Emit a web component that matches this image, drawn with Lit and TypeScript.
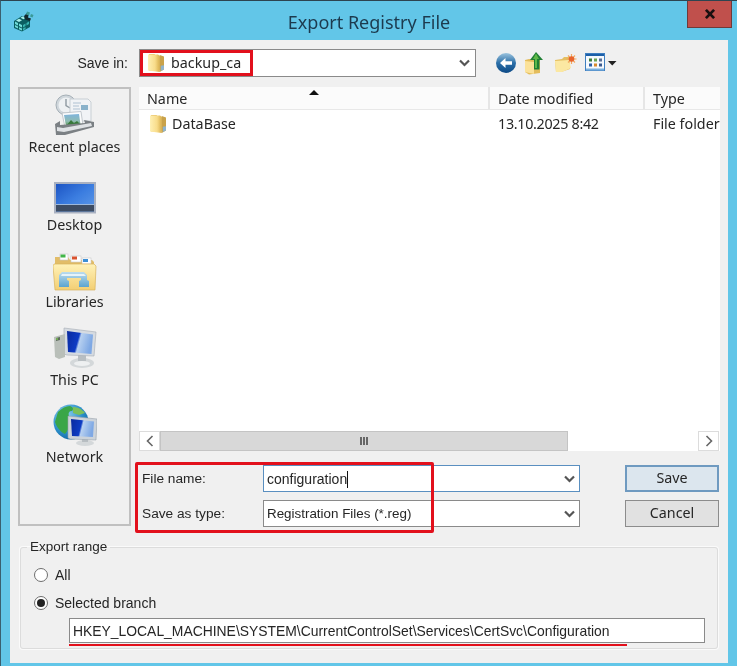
import { LitElement, html, css } from "lit";
import { customElement } from "lit/decorators.js";

const folderSmall = (id: string) => html`<svg class="ico-folder" width="16" height="20" viewBox="1 2 15 18">
  <defs><linearGradient id=${id} x1="0" y1="0" x2="1" y2="0"><stop offset="0" stop-color="#fff0b4"/><stop offset=".6" stop-color="#f8dc8a"/><stop offset="1" stop-color="#d9b04e"/></linearGradient></defs>
  <path d="M2 2.500h5l1.500 1.500H12v14H2z" fill="#e3bb5e"/>
  <path d="M1 3h9.500l1.500 2v14.500L1 18z" fill=${`url(#${id})`}/>
  <path d="M12 3.500l4 1.500v12l-4 2.500z" fill="#c9a24a"/>
  <path d="M13 13.500l3-.5v4l-3 1.500z" fill="#8fb4cc"/>
</svg>`;

const regIcon = html`<svg width="22" height="22" viewBox="0 0 22 22">
  <path d="M1 11l8-5 8 4v7l-8 4.500-8-3.500z" fill="#0a5f62"/>
  <path d="M2 11.500l3 1.500v2.500l-3-1.500zM6 13.500l3 1.500v2.500l-3-1.500zM2 15l3 1.500v2l-3-1.500zM6 17.200l3 1.300v2l-3-1.300z" fill="#6fdcd8"/>
  <path d="M10 15l2.500-1.500v2.500l-2.500 1.500zM13.500 13l2.500-1.500v2.500l-2.500 1.500zM10 18.500l2.500-1.500v2L10 20.500z" fill="#36b4b0"/>
  <path d="M3 10.500l3-1.800 3 1.500-3 1.800zM7.500 7.800l2-1.200 3 1.500-2 1.200z" fill="#a8f0ea"/>
  <path d="M11 6l3-3 2 .5-1 4 3 1-1 2.500-5-1.500z" fill="#12282e"/>
  <path d="M14 1.500l3 1-1 3-3-1zM18 4l2.500 1-1 2.500-2.500-1z" fill="#3a9a98"/>
</svg>`;

const backIcon = html`<svg width="22" height="22" viewBox="0 0 22 22">
  <defs><linearGradient id="bk" x1="0" y1="0" x2="0" y2="1"><stop offset="0" stop-color="#9cc4de"/><stop offset=".5" stop-color="#2b6fa8"/><stop offset="1" stop-color="#0d4a86"/></linearGradient></defs>
  <circle cx="11" cy="11" r="10" fill="url(#bk)"/>
  <path d="M5 11l5.500-5v3.300H17v3.400h-6.500V16z" fill="#fff"/>
</svg>`;

const upIcon = html`<svg width="22" height="24" viewBox="0 0 22 24">
  <path d="M1 9l4-1 11 1v13l-11 1.500L1 21z" fill="#e4bd5c"/>
  <path d="M1 10l9 1v12l-9-2z" fill="#fbe29a"/>
  <path d="M12 1l7 8h-3.500v9.500H10V9H6z" fill="#1f7f34"/>
  <path d="M12 2.500L9 8h2v9h2V8h2z" fill="#5fb848"/>
</svg>`;

const newFolderIcon = html`<svg width="24" height="20" viewBox="0 0 24 20">
  <path d="M1 7l7-1 2-2h6v12l-9 3H2z" fill="#e4bf62"/>
  <path d="M1 8l14-1 2 8-9 4H2z" fill="#fbe8a2"/>
  <path d="M17.500 1v10M12.500 6h10M14 2.500l7 7M21 2.500l-7 7" stroke="#f2a860" stroke-width="1.200"/>
  <circle cx="17.500" cy="6" r="2.800" fill="#e8642c"/>
</svg>`;

const viewsIcon = html`<svg width="32" height="20" viewBox="0 0 32 20">
  <rect x=".5" y=".5" width="19" height="17" fill="#f5f9fd" stroke="#3f7fc0"/>
  <rect x="1" y="1" width="18" height="2" fill="#1d5fa8"/>
  <rect x="1" y="15.500" width="18" height="2" fill="#7ab0de"/>
  <rect x="4" y="5.500" width="3" height="3" fill="#3e7d3c"/><rect x="9" y="5.500" width="3" height="3" fill="#6aa450"/><rect x="14" y="5.500" width="3" height="3" fill="#5a6f95"/>
  <rect x="4" y="10.500" width="3" height="3" fill="#2d5fa8"/><rect x="9" y="10.500" width="3" height="3" fill="#d98a2e"/><rect x="14" y="10.500" width="3" height="3" fill="#3a5a8f"/>
  <path d="M23 8h8.500l-4.250 4.500z" fill="#222"/>
</svg>`;

const recentIcon = html`<svg width="44" height="42" viewBox="0 0 44 42">
  <defs><linearGradient id="rc" x1="0" y1="0" x2="0" y2="1"><stop offset="0" stop-color="#7fb4dd"/><stop offset=".6" stop-color="#8fbcb2"/><stop offset="1" stop-color="#4f8f4c"/></linearGradient></defs>
  <circle cx="13" cy="11" r="10" fill="#cfd6db" stroke="#a4aeb5"/>
  <circle cx="13" cy="11" r="7.500" fill="#eef1f3"/>
  <path d="M13 5v6.500l4 2.500" stroke="#8f9aa1" stroke-width="1.400" fill="none"/>
  <path d="M17 5h18l3 3v19H17z" fill="#f1f3f6" stroke="#c8cfd4"/>
  <path d="M20 9h8M20 12h6M20 15h7" stroke="#afc2d1" stroke-width="1.200"/>
  <rect x="28" y="11" width="7" height="5" fill="#8ab2cb"/>
  <path d="M9 19l19-1.500 2 14-18 2z" fill="#fafbfc" stroke="#b6bdc3" stroke-width=".8"/>
  <path d="M11 21l15-1 1.500 10.500L13 32z" fill="url(#rc)"/>
  <path d="M13 32l5-6 3 3 3-2 3.500 3.500z" fill="#37783b"/>
  <path d="M2 30l5-3v4l25-2-1-3 10 2v5L12 41H3z" fill="#7b8084"/>
  <path d="M4 33l6 1 28-5 1 3-28 6-7-1z" fill="#dfe2e5"/>
</svg>`;

const desktopIcon = html`<svg width="42" height="32" viewBox="0 0 42 32">
  <defs><linearGradient id="dk" x1="0" y1="0" x2="1" y2="1"><stop offset="0" stop-color="#1c54c4"/><stop offset=".5" stop-color="#3b7de0"/><stop offset="1" stop-color="#5f9ae8"/></linearGradient></defs>
  <rect x="0" y="0" width="42" height="31.500" fill="#a9b1c1"/>
  <rect x="2" y="2" width="38" height="27.500" fill="url(#dk)"/>
  <rect x="2" y="22.500" width="38" height="7" fill="#3d4c63"/>
  <rect x="2" y="22" width="38" height="1" fill="#9cb8dc"/>
</svg>`;

const librariesIcon = html`<svg width="44" height="38" viewBox="0 0 44 38">
  <defs>
    <linearGradient id="lb" x1="0" y1="0" x2="0" y2="1"><stop offset="0" stop-color="#fff2b8"/><stop offset="1" stop-color="#f3cf74"/></linearGradient>
    <linearGradient id="lb2" x1="0" y1="0" x2="0" y2="1"><stop offset="0" stop-color="#bcdcee"/><stop offset="1" stop-color="#5ba4cf"/></linearGradient>
  </defs>
  <path d="M2 4h13l2 3h22l2 2v6H2z" fill="#e2bd68"/>
  <rect x="7" y="1" width="8" height="6" fill="#fff" stroke="#c8c8c8" stroke-width=".6"/><rect x="7.500" y="1.500" width="5" height="3" fill="#43b649"/>
  <rect x="18" y="3" width="10" height="6" fill="#fff" stroke="#c8c8c8" stroke-width=".6"/><rect x="19" y="3.500" width="5" height="3" fill="#d9532f"/>
  <rect x="29" y="5" width="9" height="6" fill="#fff" stroke="#c8c8c8" stroke-width=".6"/><rect x="30" y="6" width="5" height="3" fill="#3b8fd6"/>
  <path d="M1 11h40l2 2-1 24H2L0 13z" fill="url(#lb)" stroke="#d9b35c" stroke-width=".7"/>
  <path d="M6 22l3-3h22l3 3v5l2 1v6H26v-6l2-1v-2H14v2l2 1v6H6z" fill="url(#lb2)"/>
  <path d="M9 21h22l2 2H8z" fill="#e6f3fa"/>
</svg>`;

const pcIcon = html`<svg width="44" height="42" viewBox="0 0 44 42">
  <defs>
    <linearGradient id="pc" x1="0" y1="0" x2="1" y2=".25"><stop offset="0" stop-color="#0a2a9e"/><stop offset=".48" stop-color="#0e3cc4"/><stop offset=".56" stop-color="#b7d0f0"/><stop offset="1" stop-color="#7ea8e4"/></linearGradient>
  </defs>
  <ellipse cx="29" cy="36" rx="12" ry="5" fill="#d4d8da"/>
  <path d="M25 28h8v6h-8z" fill="#b8bec2"/>
  <ellipse cx="29" cy="36.500" rx="8" ry="2.500" fill="#eef0f1"/>
  <path d="M11 1l32 4-2 24-27-1-3-1z" fill="#d6dbe1" stroke="#a4abb3" stroke-width=".6"/>
  <path d="M14 4l26 3.500-1.500 19.500L15 25z" fill="url(#pc)"/>
  <path d="M1 10l11-3v23l-6 2-4-2z" fill="#b9bfb9"/>
  <path d="M3 11l4-1v3l-4 1z" fill="#5c6a5c"/><circle cx="4" cy="12" r="1" fill="#79c050"/>
</svg>`;

const networkIcon = html`<svg width="44" height="42" viewBox="0 0 44 42">
  <defs>
    <radialGradient id="gl" cx=".35" cy=".3" r=".8"><stop offset="0" stop-color="#8fd1ef"/><stop offset=".6" stop-color="#2b8ec9"/><stop offset="1" stop-color="#0e5f9c"/></radialGradient>
    <linearGradient id="nt" x1="0" y1="0" x2="1" y2=".2"><stop offset="0" stop-color="#0a2a9e"/><stop offset=".48" stop-color="#0e3cc4"/><stop offset=".56" stop-color="#b7d0f0"/><stop offset="1" stop-color="#7ea8e4"/></linearGradient>
  </defs>
  <circle cx="18" cy="18" r="17.500" fill="url(#gl)"/>
  <path d="M5 8c4-4 8-6 12-6 3 1 4 3 2 5-3 0-4 2-3 5 3 1 3 4 1 7-1 4-2 8-5 11C8 28 4 24 2 18c1-4 2-7 3-10z" fill="#3aa648"/>
  <path d="M20 3c4 0 9 2 12 6l-6 2-6-2z" fill="#7bc05a"/>
  <ellipse cx="32" cy="39" rx="9" ry="3" fill="#d4d8da"/>
  <path d="M29 34h6v4h-6z" fill="#b8bec2"/>
  <path d="M15 12l29 3-1 21-26-1-2-1z" fill="#ccd3da" stroke="#98a2ab" stroke-width=".6"/>
  <path d="M18 15l23 2.500-1 15.500-21-1z" fill="url(#nt)"/>
</svg>`;

const chevron = html`<svg class="chev" width="11" height="8" viewBox="0 0 11 8"><path d="M1 1.500l4.500 4.500L10 1.500" fill="none" stroke="#555" stroke-width="2.200"/></svg>`;

const places = [
  { label: "Recent places", icon: recentIcon },
  { label: "Desktop", icon: desktopIcon },
  { label: "Libraries", icon: librariesIcon },
  { label: "This PC", icon: pcIcon },
  { label: "Network", icon: networkIcon },
];

@customElement("app-root")
export class AppRoot extends LitElement {
  static styles = css`
    :host { display: block; width: 737px; height: 666px; overflow: hidden; }
    * { box-sizing: border-box; }
    .shell {
      width: 737px; height: 666px; background: #62c6e8;
      border-top: 1px solid #2d4450; border-left: 1px solid #3a6070;
      display: flex; flex-direction: column;
      font: 14.3px/20px "Noto Sans", "Open Sans", sans-serif; color: #262626;
      position: relative; filter: blur(0.35px);
    }
    .titlebar { height: 39px; flex: none; display: flex; align-items: flex-start; padding: 9px 0 0 12px; position: relative; }
    .titlebar svg { flex: none; }
    .title { position: absolute; left: 0; right: 0; text-align: center; font-size: 18px; color: #1c3a4e; top: 10px; line-height: 22px; }
    .close {
      position: absolute; left: 686px; top: 0; width: 45px; height: 27px; padding: 0;
      background: #c0504c; border: 1px solid #6f3a3a; border-top: none;
      display: flex; align-items: center; justify-content: center;
    }
    .client { flex: none; height: 623px; width: 718px; margin-left: 9px; background: #f0f0f0; padding: 9px 0 0 8px; }

    .saverow { display: flex; align-items: center; height: 28px; }
    .saverow .lbl { width: 110px; text-align: right; margin-right: 11px; font: 14px/20px "Liberation Sans", sans-serif; }
    .combo { height: 28px; background: #fff; border: 1px solid #8a8a8a; display: flex; align-items: center; justify-content: space-between; padding-right: 5px; }
    .combo.top { width: 337px; }
    .picked { display: flex; align-items: center; height: 26px; width: 113px; border: 3px solid #e2101c; padding-left: 5px; gap: 7px; }
    .picked svg { flex: none; }
    .tools { display: flex; align-items: center; margin-left: 19px; }
    .tools svg:nth-child(1) { margin-right: 7px; }
    .tools svg:nth-child(2) { margin-right: 8px; }
    .tools svg:nth-child(3) { margin-right: 7px; }

    .body { display: flex; gap: 8px; margin-top: 10px; align-items: flex-start; }
    .side { width: 113px; height: 439px; border: 2px solid #c0c0c0; padding-top: 7px; background: #f0f0f0; }
    .place { height: 77.5px; display: flex; flex-direction: column; align-items: center; }
    .place .pic { height: 40px; display: flex; align-items: flex-end; justify-content: center; filter: blur(0.3px); }
    .place .cap { line-height: 20px; margin-top: 1px; white-space: nowrap; }

    .main { width: 581px; position: relative; }
    .list { height: 364px; background: #fff; display: flex; flex-direction: column; }
    .head { height: 23px; display: flex; flex: none; border-bottom: 1px solid #e8e8e8; background: #fbfbfb; }
    .hcell { padding-left: 8px; line-height: 24px; border-right: 2px solid #e6e6e6; position: relative; white-space: nowrap; }
    .c1 { width: 351px; } .c2 { width: 155px; } .c3 { width: 75px; border-right: none; overflow: hidden; }
    .sort { position: absolute; left: 170px; top: 3px; width: 0; height: 0; border-left: 5px solid transparent; border-right: 5px solid transparent; border-bottom: 5px solid #111; }
    .rows { flex: 1; padding-top: 2px; }
    .row { height: 24px; display: flex; align-items: center; }
    .cell { padding-left: 8px; white-space: nowrap; overflow: hidden; }
    .cell.name { display: flex; align-items: center; gap: 6px; padding-left: 11px; }
    .cell.date { letter-spacing: -0.3px; }

    .hscroll { height: 20px; flex: none; display: flex; width: 580px; background: #fff; }
    .sbtn { width: 21px; display: flex; align-items: center; justify-content: center; border: 1px solid #dcdcdc; background: #fff; flex: none; }
    .thumb { width: 408px; background: #d8d8d8; border: 1px solid #c4c4c4; display: flex; align-items: center; justify-content: center; gap: 1px; flex: none; }
    .thumb i { width: 2px; height: 8px; background: #666; display: block; }
    .track { flex: 1; }

    .fields { margin-top: 14px; display: grid; grid-template-columns: 124px 317px 45px 94px; row-gap: 8px; align-items: center; position: relative; font: 14px/20px "Liberation Sans", sans-serif; }
    .fields .flbl { padding-left: 3px; font-size: 13.7px; }
    .input { height: 27px; background: #fff; border: 1px solid #8a8a8a; display: flex; align-items: center; justify-content: space-between; padding: 0 4px 0 3px; white-space: nowrap; }
    .input.focus { border-color: #5a8fc0; }
    .input .type { font-size: 13.4px; }
    .caret { display: inline-block; width: 1px; height: 17px; background: #111; vertical-align: -4px; }
    .btn { height: 27px; grid-column: 4; background: #e1e1e1; border: 1px solid #8c8c8c; text-align: center; font: 14.3px/24px "Noto Sans", sans-serif; }
    .btn.def { background: #dce6ee; border: 2px solid #6f9ac0; line-height: 22px; }
    .redbox { position: absolute; left: -4px; top: -3px; width: 299px; height: 71px; border: 3px solid #e2101c; border-radius: 2px; pointer-events: none; }

    fieldset { margin: 10px 0 0 2px; padding: 4px 13px 0; width: 698px; height: 112px; border: 1px solid #dcdcdc; border-radius: 3px; box-shadow: 0 0 0 1px #fafafa; min-width: 0; display: block; font: 14px/20px "Liberation Sans", sans-serif; }
    legend { padding: 0 3px; margin-left: -7px; line-height: 20px; font-size: 13.5px; }
    .radio { height: 28px; display: flex; align-items: center; gap: 7px; }
    .dot { width: 14px; height: 14px; border-radius: 50%; background: #fff; border: 1px solid #6e6e6e; display: flex; align-items: center; justify-content: center; flex: none; }
    .dot b { width: 8px; height: 8px; border-radius: 50%; background: #222; display: block; }
    .branch { margin: 1px 0 0 35px; width: 636px; height: 25px; background: #fff; border: 1px solid #8a8a8a; padding-left: 3px; font-size: 13.9px; line-height: 25px; white-space: nowrap; overflow: hidden; }
    .under { margin: 1px 0 0 35px; width: 558px; height: 2px; background: #e2101c; }
  `;

  render() {
    return html`<div class="shell">
      <div class="titlebar">
        ${regIcon}
        <div class="title">Export Registry File</div>
        <div class="close"><svg width="12" height="10" viewBox="0 0 13 11"><path d="M2 1l9 9M11 1l-9 9" stroke="#1a1010" stroke-width="3"/></svg></div>
      </div>
      <div class="client">
        <div class="saverow">
          <div class="lbl">Save in:</div>
          <div class="combo top">
            <div class="picked">${folderSmall("f1")}<span>backup_ca</span></div>
            ${chevron}
          </div>
          <div class="tools">${backIcon}${upIcon}${newFolderIcon}${viewsIcon}</div>
        </div>
        <div class="body">
          <div class="side">
            ${places.map((p) => html`<div class="place"><div class="pic">${p.icon}</div><div class="cap">${p.label}</div></div>`)}
          </div>
          <div class="main">
            <div class="list">
              <div class="head">
                <div class="hcell c1">Name<span class="sort"></span></div>
                <div class="hcell c2">Date modified</div>
                <div class="hcell c3">Type</div>
              </div>
              <div class="rows">
                <div class="row">
                  <div class="cell name c1">${folderSmall("f2")}<span>DataBase</span></div>
                  <div class="cell date c2">13.10.2025 8:42</div>
                  <div class="cell c3">File folder</div>
                </div>
              </div>
              <div class="hscroll">
                <div class="sbtn"><svg width="8" height="12" viewBox="0 0 8 12"><path d="M6.500 1L1.500 6l5 5" fill="none" stroke="#666" stroke-width="1.600"/></svg></div>
                <div class="thumb"><i></i><i></i><i></i></div>
                <div class="track"></div>
                <div class="sbtn"><svg width="8" height="12" viewBox="0 0 8 12"><path d="M1.500 1l5 5-5 5" fill="none" stroke="#666" stroke-width="1.600"/></svg></div>
              </div>
            </div>
            <div class="fields">
              <div class="flbl">File name:</div>
              <div class="input focus"><span>configuration<span class="caret"></span></span>${chevron}</div>
              <div></div>
              <div class="btn def">Save</div>
              <div class="flbl">Save as type:</div>
              <div class="input"><span class="type">Registration Files (*.reg)</span>${chevron}</div>
              <div></div>
              <div class="btn">Cancel</div>
              <div class="redbox"></div>
            </div>
          </div>
        </div>
        <fieldset>
          <legend>Export range</legend>
          <div class="radio"><span class="dot"></span>All</div>
          <div class="radio"><span class="dot"><b></b></span>Selected branch</div>
          <div class="branch">HKEY_LOCAL_MACHINE\\SYSTEM\\CurrentControlSet\\Services\\CertSvc\\Configuration</div>
          <div class="under"></div>
        </fieldset>
      </div>
    </div>`;
  }
}
